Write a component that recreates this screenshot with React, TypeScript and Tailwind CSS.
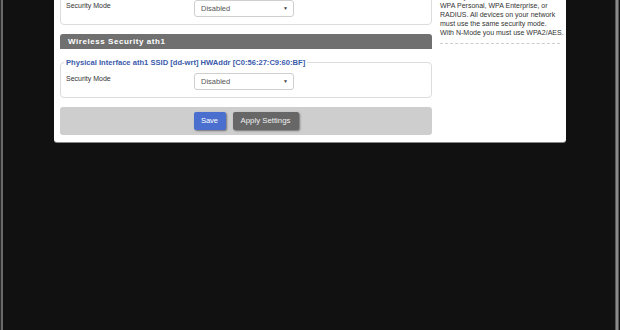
function SelectBox() {
  return (
    <div className="flex h-[17px] w-[100px] items-center justify-between rounded-[3px] border border-[#cfcfcf] bg-white pl-[6px] pr-[5px] text-[7.5px] text-[#555]">
      <span>Disabled</span>
      <span className="text-[5px] text-[#444]">▼</span>
    </div>
  );
}

function ModeRow() {
  return (
    <div className="flex h-[17px] items-start">
      <span className="w-[128px] pt-[1px] text-[7px] text-[#333]">Security Mode</span>
      <SelectBox />
    </div>
  );
}

export default function App() {
  return (
    <div className="flex h-[330px] w-[620px] overflow-hidden bg-[#111111] font-['Liberation_Sans',Arial,sans-serif]">
      <div className="h-full w-[3px] border-l border-[#2a2a2a] bg-[#6a6a6a]" />
      <div className="flex-1">
        <div className="-mt-[30px] ml-[51px] flex w-[512px] gap-[8px] rounded-b-[3px] bg-white px-[6px] pt-[6px] pb-[7px] shadow-[0_1px_0_#888]">
          <div className="flex w-[372px] shrink-0 flex-col">
            <div className="rounded-[4px] border border-[#dcdcdc] px-[5px] pt-[23px] pb-[7px]">
              <ModeRow />
            </div>

            <div className="mt-[9px] flex h-[15px] items-center rounded-t-[3px] bg-[#707070] px-[8px] text-[8px] font-bold tracking-[0.55px] text-white">
              Wireless Security ath1
            </div>

            <div className="relative mt-[13px] rounded-[4px] border border-[#dcdcdc] px-[5px] pt-[10px] pb-[7px]">
              <div className="absolute -top-[5px] left-[3px] bg-white px-[2px] text-[7.6px] leading-[9px] font-bold text-[#3a5bab]">
                Physical Interface ath1 SSID [dd-wrt] HWAddr [C0:56:27:C9:60:BF]
              </div>
              <ModeRow />
            </div>

            <div className="mt-[9px] flex h-[28px] items-center justify-center gap-[7px] rounded-[3px] bg-[#cecece]">
              <button className="h-[18px] w-[32px] rounded-[2px] bg-[#4a6fcf] text-[7.5px] text-white shadow-[1px_1px_2px_rgba(0,0,0,0.45)]">
                Save
              </button>
              <button className="h-[18px] w-[66px] rounded-[2px] bg-[#676767] text-[7.8px] text-[#f0f0f0] shadow-[1px_1px_2px_rgba(0,0,0,0.45)]">
                Apply Settings
              </button>
            </div>
          </div>

          <div className="flex w-[120px] shrink-0 flex-col">
            <div className="mt-[7px] border-b border-dashed border-[#cccccc] pb-[6px] text-[7px] leading-[9px] whitespace-nowrap text-[#333]">
              <div className="font-bold">Security Mode:</div>
              <div>You may choose from Disable, WEP,</div>
              <div>WPA Personal, WPA Enterprise, or</div>
              <div>RADIUS. All devices on your network</div>
              <div>must use the same security mode.</div>
              <div>With N-Mode you must use WPA2/AES.</div>
            </div>
          </div>
        </div>
      </div>
      <div className="mr-[1px] h-full w-[4px] border-x border-[#555] bg-[#8a8a8a]" />
    </div>
  );
}
